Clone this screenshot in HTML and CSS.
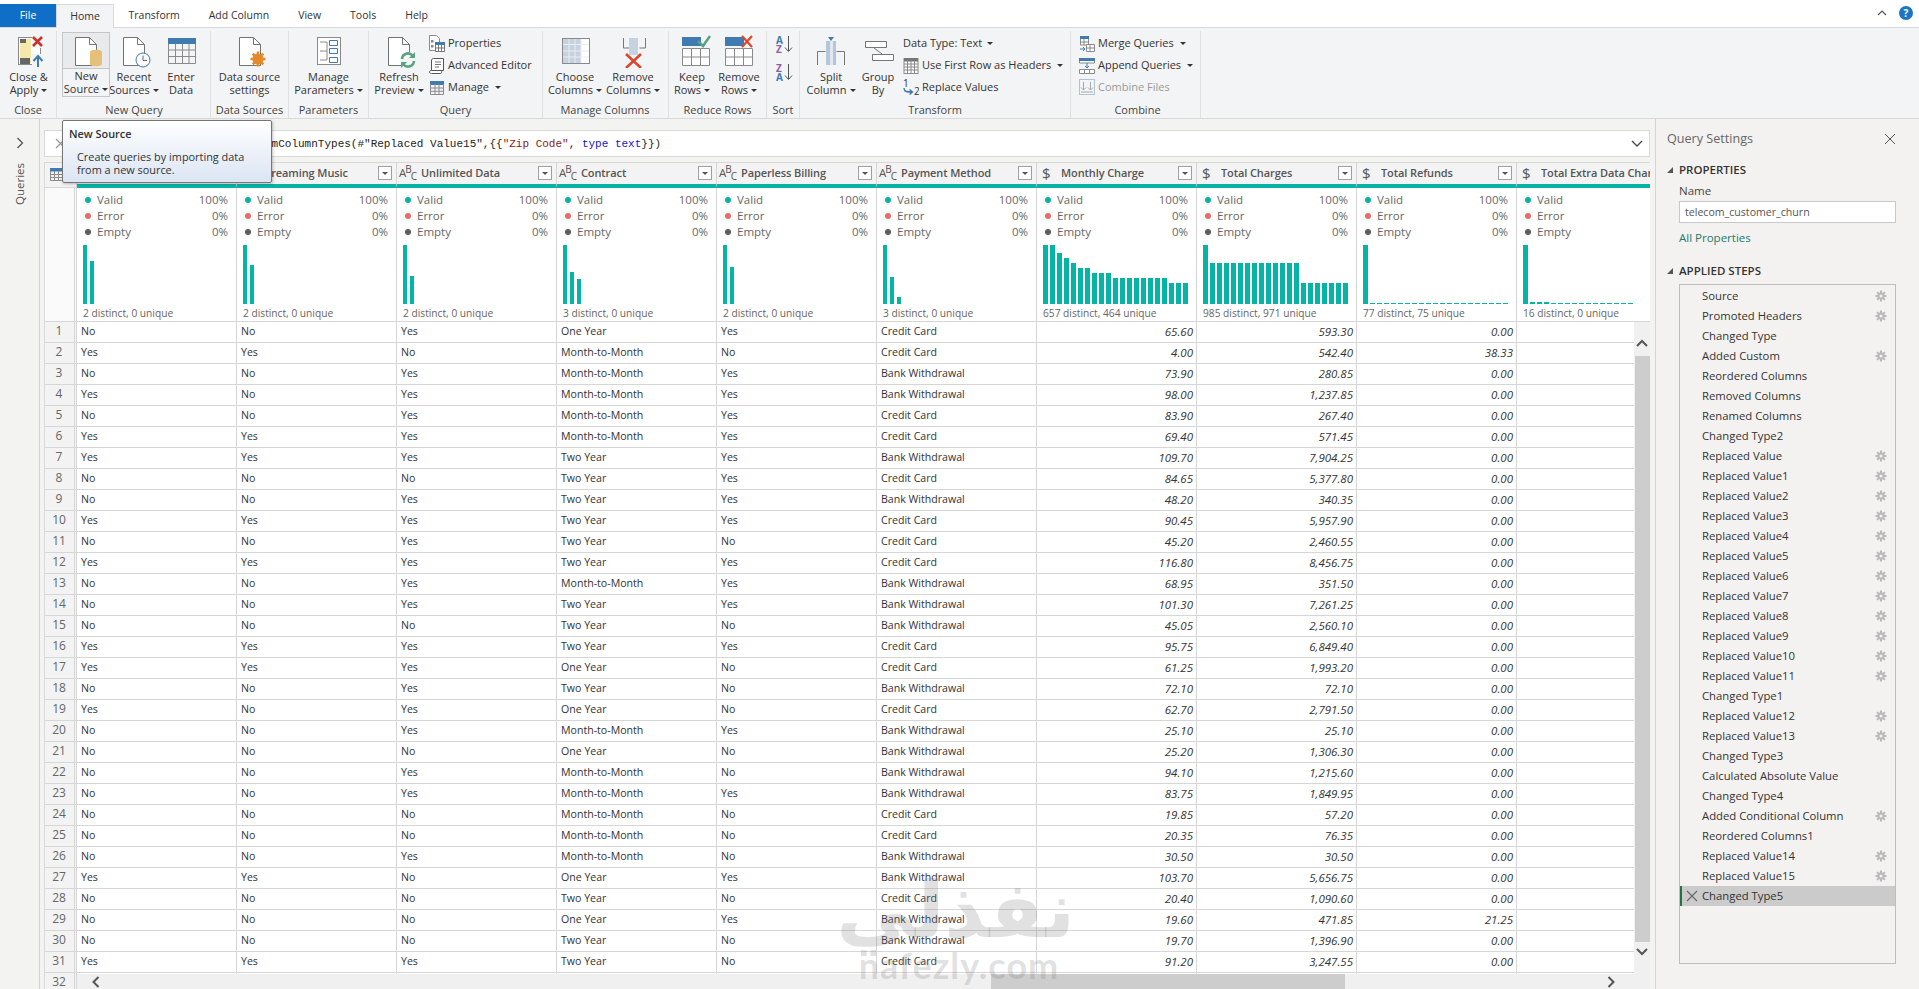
FILE: index.html
```html
<!DOCTYPE html>
<html lang="en">
<head>
<meta charset="utf-8">
<title>Power Query Editor</title>
<link rel="stylesheet" href="styles.css">
</head>
<body>
<svg class="defs" width="0" height="0" aria-hidden="true">
  <symbol id="gear" viewBox="0 0 12 12">
    <path d="M6 .5v11M.5 6h11M2.1 2.1l7.8 7.8M9.9 2.1l-7.8 7.8" stroke="#b9b9b9" stroke-width="2" fill="none"/>
    <circle cx="6" cy="6" r="3.6" fill="#b9b9b9"/>
    <circle cx="6" cy="6" r="1.5" fill="#f3f2f1"/>
  </symbol>
  <symbol id="page" viewBox="0 0 34 34">
    <path d="M6.5 3.5h14l7 7v21h-21z" fill="#fff" stroke="#737373"/>
    <path d="M20.5 3.5v7h7" fill="none" stroke="#737373"/>
  </symbol>
</svg>

<div class="tabs">
  <div class="tab file">File</div>
  <div class="tab home">Home</div>
  <div class="tab">Transform</div>
  <div class="tab">Add Column</div>
  <div class="tab">View</div>
  <div class="tab">Tools</div>
  <div class="tab">Help</div>
  <div class="tab-right">
    <svg width="10" height="6" viewBox="0 0 10 6"><path d="M1 5l4-4 4 4" fill="none" stroke="#555" stroke-width="1.2"/></svg>
    <span class="help">?</span>
  </div>
</div>

<div class="ribbon">
  <div class="group g1">
    <div class="gbody">
      <div class="btn w57">
        <div class="ico"><svg width="34" height="34" viewBox="0 0 34 34">
          <rect x="6.5" y="3.5" width="22" height="27" fill="#fff" stroke="#8a8a8a"/>
          <rect x="8" y="5" width="11" height="24" fill="#f6e8ad"/>
          <rect x="8" y="5" width="6" height="4" fill="#666"/>
          <rect x="8" y="24" width="10" height="6" fill="#666"/>
          <rect x="20" y="1" width="13" height="13" fill="#f3f4f5"/>
          <path d="M21 3l9 9M30 3l-9 9" stroke="#c8332b" stroke-width="2.6"/>
          <rect x="20" y="20" width="13" height="14" fill="#f3f4f5"/>
          <path d="M26 33V23M21.500 27l4.500-5 4.500 5" fill="none" stroke="#3f7ab0" stroke-width="2"/>
        </svg></div>
        <div class="lbl">Close &amp;<br>Apply<i class="caret"></i></div>
      </div>
    </div>
    <div class="gname">Close</div>
  </div>
  <div class="group g2">
    <div class="gbody">
      <div class="btn w48 hot">
        <div class="ico"><svg width="34" height="34" viewBox="0 0 34 34">
          <use href="#page" width="34" height="34"/>
          <path d="M21 18c0-3 12-3 12 0v12c0 3-12 3-12 0z" fill="#e5c078"/>
        </svg></div>
        <div class="lbl">New<br>Source<i class="caret"></i></div>
      </div>
      <div class="btn w48">
        <div class="ico"><svg width="34" height="34" viewBox="0 0 34 34">
          <use href="#page" width="34" height="34"/>
          <circle cx="26" cy="26" r="7" fill="#fff" stroke="#3f7ab0"/>
          <path d="M26 21.500v5h4" fill="none" stroke="#666"/>
        </svg></div>
        <div class="lbl">Recent<br>Sources<i class="caret"></i></div>
      </div>
      <div class="btn w46">
        <div class="ico"><svg width="34" height="34" viewBox="0 0 34 34">
          <rect x="4" y="4" width="28" height="6" fill="#3f7ab0"/>
          <path d="M4.500 10v19.500h27V10M4.500 16h27M4.500 22.500h27M11.500 10v19.500M18.500 10v19.500M25 10v19.500" fill="none" stroke="#8a8a8a"/>
        </svg></div>
        <div class="lbl">Enter<br>Data</div>
      </div>
    </div>
    <div class="gname">New Query</div>
  </div>
  <div class="group g3">
    <div class="gbody">
      <div class="btn wfull">
        <div class="ico"><svg width="34" height="34" viewBox="0 0 34 34">
          <use href="#page" width="34" height="34"/>
          <path d="M25 17.500v15M17.500 25h15M19.700 19.700l10.600 10.600M30.300 19.700l-10.600 10.600" stroke="#e38a2c" stroke-width="2.600"/>
          <circle cx="25" cy="25" r="4.300" fill="none" stroke="#e38a2c" stroke-width="2.500"/>
        </svg></div>
        <div class="lbl">Data source<br>settings</div>
      </div>
    </div>
    <div class="gname">Data Sources</div>
  </div>
  <div class="group g4">
    <div class="gbody">
      <div class="btn wfull">
        <div class="ico"><svg width="34" height="34" viewBox="0 0 34 34">
          <rect x="5.500" y="3.500" width="23" height="27" fill="#fff" stroke="#8a8a8a"/>
          <path d="M8 8h7M8 17h7M8 26h7M15 8v18" fill="none" stroke="#8a8a8a"/>
          <path d="M17.500 6.500h8v5h-8zM17.500 14.500h8v5h-8zM17.500 23.500h8v5h-8z" fill="#fff" stroke="#3f7ab0"/>
        </svg></div>
        <div class="lbl">Manage<br>Parameters<i class="caret"></i></div>
      </div>
    </div>
    <div class="gname">Parameters</div>
  </div>
  <div class="group g5">
    <div class="gbody">
      <div class="btn w60">
        <div class="ico"><svg width="34" height="34" viewBox="0 0 34 34">
          <use href="#page" width="34" height="34"/>
          <circle cx="26" cy="26" r="8" fill="#f3f4f5"/>
          <path d="M20 25a6 6 0 0 1 10.500-3.500M32 27a6 6 0 0 1-10.500 3.500" fill="none" stroke="#5aa382" stroke-width="2.600"/>
          <path d="M33 18v6h-6zM19 34v-6h6z" fill="#5aa382"/>
        </svg></div>
        <div class="lbl">Refresh<br>Preview<i class="caret"></i></div>
      </div>
      <div class="smalls">
        <div class="small"><svg width="16" height="17" viewBox="0 0 16 17">
          <path d="M.5.500h7l3 3v12h-10z" fill="#fff" stroke="#8a8a8a"/>
          <rect x="2" y="5" width="2.500" height="2.500" fill="#888"/><rect x="2" y="10" width="2.500" height="2.500" fill="#888"/>
          <rect x="6" y="7" width="10" height="3" fill="#3f7ab0"/>
          <path d="M6.500 10v6.500h9V10M6.500 13h9M9.500 10v6.500M12.500 10v6.500" fill="#fff" stroke="#777"/>
        </svg>Properties</div>
        <div class="small"><svg width="16" height="17" viewBox="0 0 16 17">
          <path d="M4.500 1.500h10v12h-12V4a2 2 0 0 1 2-2.500zM2.500 13.500c-1 0-2 .5-2 1.500s1 1.500 2 1.500h9c1 0 1.500-1.500 1-3" fill="#fff" stroke="#555"/>
          <path d="M6 5h6M6 7.500h6M6 10h4" stroke="#777"/>
        </svg>Advanced Editor</div>
        <div class="small"><svg width="16" height="17" viewBox="0 0 16 17">
          <rect x="1" y="2" width="14" height="4" fill="#3f7ab0"/>
          <path d="M1.500 5v10.500h13V5M1.500 9h13M1.500 12.300h13M6 5v10.500M10 5v10.500" fill="none" stroke="#8a8a8a"/>
        </svg>Manage<i class="caret gapped"></i></div>
      </div>
    </div>
    <div class="gname">Query</div>
  </div>
  <div class="group g6">
    <div class="gbody">
      <div class="btn w58">
        <div class="ico"><svg width="34" height="34" viewBox="0 0 34 34">
          <rect x="4.500" y="4.500" width="27" height="25" fill="#fff" stroke="#8a8a8a"/>
          <rect x="5" y="5" width="18" height="24" fill="#c6d2e0"/>
          <path d="M5 10.500h26M5 17h26M5 23h26M11 5v24M17 5v24M23 5v24" stroke="#e8edf2"/>
        </svg></div>
        <div class="lbl">Choose<br>Columns<i class="caret"></i></div>
      </div>
      <div class="btn w58">
        <div class="ico"><svg width="34" height="34" viewBox="0 0 34 34">
          <path d="M7.500 4v10h6M29.500 4v10h-6" fill="none" stroke="#777"/>
          <rect x="13" y="4" width="9" height="17" fill="#c6d2e0"/>
          <path d="M10 20l15 14M25 20L10 34" stroke="#d9482b" stroke-width="2.600"/>
        </svg></div>
        <div class="lbl">Remove<br>Columns<i class="caret"></i></div>
      </div>
    </div>
    <div class="gname">Manage Columns</div>
  </div>
  <div class="group g7">
    <div class="gbody">
      <div class="btn w46">
        <div class="ico"><svg class="over" width="34" height="34" viewBox="0 0 34 34">
          <rect x="7" y="3" width="19" height="9" fill="#3f7ab0"/>
          <path d="M23 7l5 5 7-10" fill="none" stroke="#5aa382" stroke-width="2.500"/>
          <path d="M7.500 14.500h27v17h-27zM7.500 23h27M16.500 14.500v17M25.500 14.500v17" fill="#fff" stroke="#8a8a8a"/>
        </svg></div>
        <div class="lbl">Keep<br>Rows<i class="caret"></i></div>
      </div>
      <div class="btn w48">
        <div class="ico"><svg class="over" width="34" height="34" viewBox="0 0 34 34">
          <rect x="3" y="3" width="19" height="9" fill="#3f7ab0"/>
          <path d="M20 2l10 11M30 2L20 13" stroke="#d9482b" stroke-width="2.300"/>
          <path d="M3.500 14.500h27v17h-27zM3.500 23h27M12.500 14.500v17M21.500 14.500v17" fill="#fff" stroke="#8a8a8a"/>
        </svg></div>
        <div class="lbl">Remove<br>Rows<i class="caret"></i></div>
      </div>
    </div>
    <div class="gname">Reduce Rows</div>
  </div>
  <div class="group g8">
    <div class="gbody sortbody">
      <svg width="18" height="20" viewBox="0 0 18 20">
        <text x="0" y="9" class="sa">A</text><text x="0" y="18" class="sz">Z</text>
        <path d="M12.500 1v15M9 12.500l3.500 4 3.500-4" fill="none" stroke="#555"/>
      </svg>
      <svg width="18" height="20" viewBox="0 0 18 20">
        <text x="0" y="9" class="sz">Z</text><text x="0" y="18" class="sa">A</text>
        <path d="M12.500 1v15M9 12.500l3.500 4 3.500-4" fill="none" stroke="#555"/>
      </svg>
    </div>
    <div class="gname">Sort</div>
  </div>
  <div class="group g9">
    <div class="gbody">
      <div class="btn w54">
        <div class="ico"><svg width="34" height="34" viewBox="0 0 34 34">
          <path d="M3.500 31V17.500h8M30.500 31V17.500h-8" fill="none" stroke="#777"/>
          <rect x="12" y="7" width="10" height="24" fill="#e3e8ee"/>
          <rect x="12" y="7" width="4" height="24" fill="#b6c6da"/>
          <rect x="19" y="7" width="3" height="24" fill="#b6c6da"/>
          <path d="M14 3h6l-3 4z" fill="#3f7ab0"/>
        </svg></div>
        <div class="lbl">Split<br>Column<i class="caret"></i></div>
      </div>
      <div class="btn w40">
        <div class="ico"><svg width="34" height="34" viewBox="0 0 34 34">
          <path d="M4.500 7.500h21v6h-21zM11.500 20.500h21v6h-21zM13 14l8 6" fill="#fff" stroke="#777"/>
        </svg></div>
        <div class="lbl">Group<br>By</div>
      </div>
      <div class="smalls tf">
        <div class="small">Data Type: Text<i class="caret"></i></div>
        <div class="small"><svg width="16" height="17" viewBox="0 0 16 17">
          <rect x="1" y="1.500" width="14" height="15" fill="#fff" stroke="#8a8a8a"/>
          <rect x="1" y="1" width="14" height="3.500" fill="#777"/>
          <path d="M1 7h14M1 10h14M1 13h14M4.500 4v12M8 4v12M11.500 4v12" stroke="#8a8a8a"/>
        </svg>Use First Row as Headers<i class="caret gapped"></i></div>
        <div class="small"><svg width="16" height="17" viewBox="0 0 16 17">
          <text x="0" y="8" class="nn">1</text><text x="11" y="16" class="nn">2</text>
          <path d="M1 9c0 4 3 4 8 4M6.500 10.500L9.500 13l-3 2.500" fill="none" stroke="#3f7ab0" stroke-width="1.400"/>
        </svg>Replace Values</div>
      </div>
    </div>
    <div class="gname">Transform</div>
  </div>
  <div class="group g10">
    <div class="gbody">
      <div class="smalls cb">
        <div class="small"><svg width="16" height="17" viewBox="0 0 16 17">
          <rect x="1" y="1" width="9" height="3" fill="#3f7ab0"/>
          <path d="M1.500 4v6h8V4M1.500 7h8M5 4v6" fill="#fff" stroke="#8a8a8a"/>
          <path d="M7.500 9.500h8v7h-8zM7.500 13h8M11 9.500v7" fill="#fff" stroke="#8a8a8a"/>
          <path d="M1 14h5M4 12l2 2-2 2" fill="none" stroke="#3f7ab0"/>
        </svg>Merge Queries<i class="caret gapped"></i></div>
        <div class="small"><svg width="16" height="17" viewBox="0 0 16 17">
          <rect x="0" y="1" width="16" height="3" fill="#3f7ab0"/>
          <path d="M.500 4v2h15V4M.500 12.500h15v4H.500zM5.500 12.500v4M10.500 12.500v4" fill="#fff" stroke="#8a8a8a"/>
          <path d="M8 6v5M6 9l2 2 2-2" fill="none" stroke="#3f7ab0"/>
        </svg>Append Queries<i class="caret gapped"></i></div>
        <div class="small off"><svg width="16" height="17" viewBox="0 0 16 17">
          <rect x=".5" y=".5" width="15" height="15" fill="none" stroke="#b3c2d0"/>
          <path d="M4.500 3v8M2 8.500l2.500 2.500L7 8.500M11.500 3v8M9 8.500l2.500 2.500L14 8.500M2 13h12" fill="none" stroke="#a8a8a8"/>
        </svg>Combine Files</div>
      </div>
    </div>
    <div class="gname">Combine</div>
  </div>
</div>

<div class="main">
  <div class="qpane">
    <svg width="8" height="12" viewBox="0 0 8 12"><path d="M1.500 1l5 5-5 5" fill="none" stroke="#555" stroke-width="1.300"/></svg>
    <div class="qlabel">Queries</div>
  </div>

  <div class="center">
    <div class="fbar">
      <div class="fbtns">
        <svg width="11" height="11" viewBox="0 0 11 11"><path d="M1 1l9 9M10 1l-9 9" stroke="#999" stroke-width="1.300"/></svg>
      </div>
      <code class="formula">= Table.TransformColumnTypes(#"Replaced Value15",{{<span class="str">"Zip Code"</span>, <span class="kw">type text</span>}})</code>
      <svg class="fchev" width="12" height="7" viewBox="0 0 12 7"><path d="M1 1l5 5 5-5" fill="none" stroke="#444" stroke-width="1.300"/></svg>
    </div>

    <div class="gridwrap">
      <table class="grid">
        <colgroup><col class="c0"><col class="cc" span="9"><col class="cl"></colgroup>
        <thead>
          <tr class="hdr">
            <th class="corner"><svg width="13" height="13" viewBox="0 0 13 13"><rect x="0" y="0" width="13" height="3.500" fill="#3f7ab0"/><path d="M.5 3v9.500h12V3M.5 6.500h12M.5 9.500h12M4.500 3v9.500M8.500 3v9.500" fill="none" stroke="#8a8a8a"/></svg></th>
            <th><div class="hc"><span class="abc">A<sup>B</sup><sub>C</sub></span><span class="hn">Streaming Video</span><i class="dd"></i></div></th>
            <th><div class="hc"><span class="abc">A<sup>B</sup><sub>C</sub></span><span class="hn">Streaming Music</span><i class="dd"></i></div></th>
            <th><div class="hc"><span class="abc">A<sup>B</sup><sub>C</sub></span><span class="hn">Unlimited Data</span><i class="dd"></i></div></th>
            <th><div class="hc"><span class="abc">A<sup>B</sup><sub>C</sub></span><span class="hn">Contract</span><i class="dd"></i></div></th>
            <th><div class="hc"><span class="abc">A<sup>B</sup><sub>C</sub></span><span class="hn">Paperless Billing</span><i class="dd"></i></div></th>
            <th><div class="hc"><span class="abc">A<sup>B</sup><sub>C</sub></span><span class="hn">Payment Method</span><i class="dd"></i></div></th>
            <th><div class="hc"><span class="abc usd">$</span><span class="hn">Monthly Charge</span><i class="dd"></i></div></th>
            <th><div class="hc"><span class="abc usd">$</span><span class="hn">Total Charges</span><i class="dd"></i></div></th>
            <th><div class="hc"><span class="abc usd">$</span><span class="hn">Total Refunds</span><i class="dd"></i></div></th>
            <th><div class="hc"><span class="abc usd">$</span><span class="hn">Total Extra Data Charges</span><i class="dd"></i></div></th>
          </tr>
          <tr class="prof">
            <th></th>
            <td><div class="q"><b class="v"></b>Valid<em>100%</em></div><div class="q"><b class="e"></b>Error<em>0%</em></div><div class="q"><b class="m"></b>Empty<em>0%</em></div>
              <div class="bars"><i style="height:59px"></i><i style="height:43px"></i></div><div class="dist">2 distinct, 0 unique</div></td>
            <td><div class="q"><b class="v"></b>Valid<em>100%</em></div><div class="q"><b class="e"></b>Error<em>0%</em></div><div class="q"><b class="m"></b>Empty<em>0%</em></div>
              <div class="bars"><i style="height:59px"></i><i style="height:39px"></i></div><div class="dist">2 distinct, 0 unique</div></td>
            <td><div class="q"><b class="v"></b>Valid<em>100%</em></div><div class="q"><b class="e"></b>Error<em>0%</em></div><div class="q"><b class="m"></b>Empty<em>0%</em></div>
              <div class="bars"><i style="height:59px"></i><i style="height:28px"></i></div><div class="dist">2 distinct, 0 unique</div></td>
            <td><div class="q"><b class="v"></b>Valid<em>100%</em></div><div class="q"><b class="e"></b>Error<em>0%</em></div><div class="q"><b class="m"></b>Empty<em>0%</em></div>
              <div class="bars"><i style="height:59px"></i><i style="height:32px"></i><i style="height:25px"></i></div><div class="dist">3 distinct, 0 unique</div></td>
            <td><div class="q"><b class="v"></b>Valid<em>100%</em></div><div class="q"><b class="e"></b>Error<em>0%</em></div><div class="q"><b class="m"></b>Empty<em>0%</em></div>
              <div class="bars"><i style="height:59px"></i><i style="height:37px"></i></div><div class="dist">2 distinct, 0 unique</div></td>
            <td><div class="q"><b class="v"></b>Valid<em>100%</em></div><div class="q"><b class="e"></b>Error<em>0%</em></div><div class="q"><b class="m"></b>Empty<em>0%</em></div>
              <div class="bars"><i style="height:59px"></i><i style="height:27px"></i><i style="height:7px"></i></div><div class="dist">3 distinct, 0 unique</div></td>
            <td><div class="q"><b class="v"></b>Valid<em>100%</em></div><div class="q"><b class="e"></b>Error<em>0%</em></div><div class="q"><b class="m"></b>Empty<em>0%</em></div>
              <div class="bars dense"><i style="height:59px"></i><i style="height:59px"></i><i style="height:51px"></i><i style="height:46px"></i><i style="height:41px"></i><i style="height:36px"></i><i style="height:36px"></i><i style="height:31px"></i><i style="height:31px"></i><i style="height:31px"></i><i style="height:26px"></i><i style="height:26px"></i><i style="height:26px"></i><i style="height:26px"></i><i style="height:26px"></i><i style="height:26px"></i><i style="height:26px"></i><i style="height:26px"></i><i style="height:21px"></i><i style="height:21px"></i><i style="height:21px"></i></div><div class="dist">657 distinct, 464 unique</div></td>
            <td><div class="q"><b class="v"></b>Valid<em>100%</em></div><div class="q"><b class="e"></b>Error<em>0%</em></div><div class="q"><b class="m"></b>Empty<em>0%</em></div>
              <div class="bars dense"><i style="height:59px"></i><i style="height:41px"></i><i style="height:41px"></i><i style="height:41px"></i><i style="height:41px"></i><i style="height:41px"></i><i style="height:41px"></i><i style="height:41px"></i><i style="height:41px"></i><i style="height:41px"></i><i style="height:41px"></i><i style="height:41px"></i><i style="height:41px"></i><i style="height:41px"></i><i style="height:21px"></i><i style="height:21px"></i><i style="height:21px"></i><i style="height:21px"></i><i style="height:21px"></i><i style="height:21px"></i><i style="height:21px"></i></div><div class="dist">985 distinct, 971 unique</div></td>
            <td><div class="q"><b class="v"></b>Valid<em>100%</em></div><div class="q"><b class="e"></b>Error<em>0%</em></div><div class="q"><b class="m"></b>Empty<em>0%</em></div>
              <div class="bars dense"><i style="height:59px"></i><i class="d"></i><i class="d"></i><i class="d"></i><i class="d"></i><i class="d"></i><i class="d"></i><i class="d"></i><i class="d"></i><i class="d"></i><i class="d"></i><i class="d"></i><i class="d"></i><i class="d"></i><i class="d"></i><i class="d"></i><i class="d"></i><i class="d"></i><i class="d"></i><i class="d"></i><i class="d"></i></div><div class="dist">77 distinct, 75 unique</div></td>
            <td><div class="q"><b class="v"></b>Valid<em>100%</em></div><div class="q"><b class="e"></b>Error<em>0%</em></div><div class="q"><b class="m"></b>Empty<em>0%</em></div>
              <div class="bars dense"><i style="height:59px"></i><i style="height:2px"></i><i style="height:2px"></i><i style="height:2px"></i><i class="d"></i><i class="d"></i><i class="d"></i><i class="d"></i><i class="d"></i><i class="d"></i><i class="d"></i><i class="d"></i><i class="d"></i><i class="d"></i><i class="d"></i><i class="d"></i></div><div class="dist">16 distinct, 0 unique</div></td>
          </tr>
        </thead>
        <tbody>
          <tr><th>1</th><td>No</td><td>No</td><td>Yes</td><td>One Year</td><td>Yes</td><td>Credit Card</td><td>65.60</td><td>593.30</td><td>0.00</td><td></td></tr>
          <tr><th>2</th><td>Yes</td><td>Yes</td><td>No</td><td>Month-to-Month</td><td>No</td><td>Credit Card</td><td>4.00</td><td>542.40</td><td>38.33</td><td></td></tr>
          <tr><th>3</th><td>No</td><td>No</td><td>Yes</td><td>Month-to-Month</td><td>Yes</td><td>Bank Withdrawal</td><td>73.90</td><td>280.85</td><td>0.00</td><td></td></tr>
          <tr><th>4</th><td>Yes</td><td>No</td><td>Yes</td><td>Month-to-Month</td><td>Yes</td><td>Bank Withdrawal</td><td>98.00</td><td>1,237.85</td><td>0.00</td><td></td></tr>
          <tr><th>5</th><td>No</td><td>No</td><td>Yes</td><td>Month-to-Month</td><td>Yes</td><td>Credit Card</td><td>83.90</td><td>267.40</td><td>0.00</td><td></td></tr>
          <tr><th>6</th><td>Yes</td><td>Yes</td><td>Yes</td><td>Month-to-Month</td><td>Yes</td><td>Credit Card</td><td>69.40</td><td>571.45</td><td>0.00</td><td></td></tr>
          <tr><th>7</th><td>Yes</td><td>Yes</td><td>Yes</td><td>Two Year</td><td>Yes</td><td>Bank Withdrawal</td><td>109.70</td><td>7,904.25</td><td>0.00</td><td></td></tr>
          <tr><th>8</th><td>No</td><td>No</td><td>No</td><td>Two Year</td><td>Yes</td><td>Credit Card</td><td>84.65</td><td>5,377.80</td><td>0.00</td><td></td></tr>
          <tr><th>9</th><td>No</td><td>No</td><td>Yes</td><td>Two Year</td><td>Yes</td><td>Bank Withdrawal</td><td>48.20</td><td>340.35</td><td>0.00</td><td></td></tr>
          <tr><th>10</th><td>Yes</td><td>Yes</td><td>Yes</td><td>Two Year</td><td>Yes</td><td>Credit Card</td><td>90.45</td><td>5,957.90</td><td>0.00</td><td></td></tr>
          <tr><th>11</th><td>No</td><td>No</td><td>Yes</td><td>Two Year</td><td>No</td><td>Credit Card</td><td>45.20</td><td>2,460.55</td><td>0.00</td><td></td></tr>
          <tr><th>12</th><td>Yes</td><td>Yes</td><td>Yes</td><td>Two Year</td><td>Yes</td><td>Credit Card</td><td>116.80</td><td>8,456.75</td><td>0.00</td><td></td></tr>
          <tr><th>13</th><td>No</td><td>No</td><td>Yes</td><td>Month-to-Month</td><td>Yes</td><td>Bank Withdrawal</td><td>68.95</td><td>351.50</td><td>0.00</td><td></td></tr>
          <tr><th>14</th><td>No</td><td>No</td><td>Yes</td><td>Two Year</td><td>Yes</td><td>Bank Withdrawal</td><td>101.30</td><td>7,261.25</td><td>0.00</td><td></td></tr>
          <tr><th>15</th><td>No</td><td>No</td><td>No</td><td>Two Year</td><td>No</td><td>Bank Withdrawal</td><td>45.05</td><td>2,560.10</td><td>0.00</td><td></td></tr>
          <tr><th>16</th><td>Yes</td><td>Yes</td><td>Yes</td><td>Two Year</td><td>Yes</td><td>Credit Card</td><td>95.75</td><td>6,849.40</td><td>0.00</td><td></td></tr>
          <tr><th>17</th><td>Yes</td><td>Yes</td><td>Yes</td><td>One Year</td><td>No</td><td>Credit Card</td><td>61.25</td><td>1,993.20</td><td>0.00</td><td></td></tr>
          <tr><th>18</th><td>No</td><td>No</td><td>Yes</td><td>Two Year</td><td>No</td><td>Bank Withdrawal</td><td>72.10</td><td>72.10</td><td>0.00</td><td></td></tr>
          <tr><th>19</th><td>Yes</td><td>No</td><td>Yes</td><td>One Year</td><td>No</td><td>Credit Card</td><td>62.70</td><td>2,791.50</td><td>0.00</td><td></td></tr>
          <tr><th>20</th><td>No</td><td>No</td><td>Yes</td><td>Month-to-Month</td><td>Yes</td><td>Bank Withdrawal</td><td>25.10</td><td>25.10</td><td>0.00</td><td></td></tr>
          <tr><th>21</th><td>No</td><td>No</td><td>No</td><td>One Year</td><td>No</td><td>Bank Withdrawal</td><td>25.20</td><td>1,306.30</td><td>0.00</td><td></td></tr>
          <tr><th>22</th><td>No</td><td>No</td><td>Yes</td><td>Month-to-Month</td><td>No</td><td>Bank Withdrawal</td><td>94.10</td><td>1,215.60</td><td>0.00</td><td></td></tr>
          <tr><th>23</th><td>No</td><td>No</td><td>Yes</td><td>Month-to-Month</td><td>Yes</td><td>Bank Withdrawal</td><td>83.75</td><td>1,849.95</td><td>0.00</td><td></td></tr>
          <tr><th>24</th><td>No</td><td>No</td><td>No</td><td>Month-to-Month</td><td>No</td><td>Credit Card</td><td>19.85</td><td>57.20</td><td>0.00</td><td></td></tr>
          <tr><th>25</th><td>No</td><td>No</td><td>No</td><td>Month-to-Month</td><td>No</td><td>Credit Card</td><td>20.35</td><td>76.35</td><td>0.00</td><td></td></tr>
          <tr><th>26</th><td>No</td><td>No</td><td>Yes</td><td>Month-to-Month</td><td>No</td><td>Bank Withdrawal</td><td>30.50</td><td>30.50</td><td>0.00</td><td></td></tr>
          <tr><th>27</th><td>Yes</td><td>Yes</td><td>No</td><td>One Year</td><td>Yes</td><td>Bank Withdrawal</td><td>103.70</td><td>5,656.75</td><td>0.00</td><td></td></tr>
          <tr><th>28</th><td>No</td><td>No</td><td>No</td><td>Two Year</td><td>No</td><td>Credit Card</td><td>20.40</td><td>1,090.60</td><td>0.00</td><td></td></tr>
          <tr><th>29</th><td>No</td><td>No</td><td>No</td><td>One Year</td><td>Yes</td><td>Bank Withdrawal</td><td>19.60</td><td>471.85</td><td>21.25</td><td></td></tr>
          <tr><th>30</th><td>No</td><td>No</td><td>No</td><td>Two Year</td><td>No</td><td>Bank Withdrawal</td><td>19.70</td><td>1,396.90</td><td>0.00</td><td></td></tr>
          <tr><th>31</th><td>Yes</td><td>Yes</td><td>Yes</td><td>Two Year</td><td>No</td><td>Credit Card</td><td>91.20</td><td>3,247.55</td><td>0.00</td><td></td></tr>
          <tr><th>32</th><td></td><td></td><td></td><td></td><td></td><td></td><td></td><td></td><td></td><td></td></tr>
        </tbody>
      </table>

      <div class="vscroll">
        <svg width="12" height="8" viewBox="0 0 12 8"><path d="M1 7l5-5 5 5" fill="none" stroke="#555" stroke-width="2"/></svg>
        <div class="vthumb"></div>
        <svg width="12" height="8" viewBox="0 0 12 8"><path d="M1 1l5 5 5-5" fill="none" stroke="#555" stroke-width="2"/></svg>
      </div>
      <div class="hscroll">
        <svg width="9" height="12" viewBox="0 0 9 12"><path d="M7.500 1l-5 5 5 5" fill="none" stroke="#555" stroke-width="2"/></svg>
        <div class="hthumb"></div>
        <svg width="9" height="12" viewBox="0 0 9 12"><path d="M1.500 1l5 5-5 5" fill="none" stroke="#555" stroke-width="2"/></svg>
      </div>
    </div>
  </div>

  <aside class="settings">
    <div class="s-head"><span>Query Settings</span>
      <svg width="12" height="12" viewBox="0 0 12 12"><path d="M1 1l10 10M11 1L1 11" stroke="#555" stroke-width="1"/></svg>
    </div>
    <div class="s-sec"><i class="tri"></i>PROPERTIES</div>
    <div class="s-name">Name</div>
    <div class="s-input">telecom_customer_churn</div>
    <div class="s-link">All Properties</div>
    <div class="s-sec s-sec2"><i class="tri"></i>APPLIED STEPS</div>
    <div class="steps">
      <div class="step">Source<svg><use href="#gear"/></svg></div>
      <div class="step">Promoted Headers<svg><use href="#gear"/></svg></div>
      <div class="step">Changed Type</div>
      <div class="step">Added Custom<svg><use href="#gear"/></svg></div>
      <div class="step">Reordered Columns</div>
      <div class="step">Removed Columns</div>
      <div class="step">Renamed Columns</div>
      <div class="step">Changed Type2</div>
      <div class="step">Replaced Value<svg><use href="#gear"/></svg></div>
      <div class="step">Replaced Value1<svg><use href="#gear"/></svg></div>
      <div class="step">Replaced Value2<svg><use href="#gear"/></svg></div>
      <div class="step">Replaced Value3<svg><use href="#gear"/></svg></div>
      <div class="step">Replaced Value4<svg><use href="#gear"/></svg></div>
      <div class="step">Replaced Value5<svg><use href="#gear"/></svg></div>
      <div class="step">Replaced Value6<svg><use href="#gear"/></svg></div>
      <div class="step">Replaced Value7<svg><use href="#gear"/></svg></div>
      <div class="step">Replaced Value8<svg><use href="#gear"/></svg></div>
      <div class="step">Replaced Value9<svg><use href="#gear"/></svg></div>
      <div class="step">Replaced Value10<svg><use href="#gear"/></svg></div>
      <div class="step">Replaced Value11<svg><use href="#gear"/></svg></div>
      <div class="step">Changed Type1</div>
      <div class="step">Replaced Value12<svg><use href="#gear"/></svg></div>
      <div class="step">Replaced Value13<svg><use href="#gear"/></svg></div>
      <div class="step">Changed Type3</div>
      <div class="step">Calculated Absolute Value</div>
      <div class="step">Changed Type4</div>
      <div class="step">Added Conditional Column<svg><use href="#gear"/></svg></div>
      <div class="step">Reordered Columns1</div>
      <div class="step">Replaced Value14<svg><use href="#gear"/></svg></div>
      <div class="step">Replaced Value15<svg><use href="#gear"/></svg></div>
      <div class="step active"><svg class="del" viewBox="0 0 12 12"><path d="M1 1l10 10M11 1L1 11" stroke="#666" stroke-width="1.100"/></svg>Changed Type5</div>
    </div>
  </aside>

  <div class="tooltip">
    <div class="tt-title">New Source</div>
    <div class="tt-body">Create queries by importing data<br>from a new source.</div>
  </div>
  <div class="watermark">
    <div class="wm-ar" lang="ar" dir="rtl">نفذلي</div>
    <div class="wm-en">nafezly.com</div>
  </div>
</div>
</body>
</html>
```
FILE: styles.css
```css
* { box-sizing: border-box; }
html, body { margin: 0; height: 100%; }
body {
  height: 989px;
  overflow: hidden;
  background: #fff;
  color: #333;
  font: 11.5px/1.2 "Open Sans", "Noto Sans", sans-serif;
  display: flex;
  flex-direction: column;
}
.defs { position: absolute; }

/* tabs */
.tabs {
  flex: none;
  height: 28px;
  padding-top: 4px;
  display: flex;
  border-bottom: 1px solid #d9d9d9;
  background: #fff;
  font-size: 10.5px;
}
.tab { padding: 0 14.5px; line-height: 23px; color: #333; }
.tab.file { width: 56px; padding: 0; text-align: center; background: #0f6fc6; color: #fff; }
.tab.home {
  width: 58px; padding: 0; text-align: center;
  height: 24px;
  background: #f3f4f5;
  border: 1px solid #d9d9d9;
  border-bottom: 0;
  line-height: 22px;
}
.tab-right { margin-left: auto; padding-right: 6px; display: flex; align-items: center; gap: 12px; height: 18px; }
.help {
  width: 14px; height: 14px; border-radius: 50%;
  background: #1b75c4; color: #fff;
  font-size: 10px; font-weight: 700; line-height: 14px; text-align: center;
}

/* ribbon */
.ribbon {
  flex: none;
  height: 91px;
  display: flex;
  background: #f3f4f5;
  border-bottom: 1px solid #d9d9d9;
  font-size: 11px;
}
.group {
  height: 87px;
  margin-top: 3px;
  display: flex;
  flex-direction: column;
  border-right: 1px solid #dfe0e1;
}
.gbody { height: 71px; padding-top: 1px; display: flex; }
.gname { height: 16px; line-height: 16px; text-align: center; color: #444; }
.g1 { width: 57px; }
.g2 { width: 154px; padding-left: 5px; }
.g3 { width: 78px; }
.g4 { width: 80px; }
.g5 { width: 174px; }
.g6 { width: 126px; padding-left: 3px; }
.g7 { width: 98px; }
.g8 { width: 33px; }
.g9 { width: 271px; padding-left: 4px; }
.g10 { width: 130px; padding-left: 8px; border-right: 1px solid #dfe0e1; }
.g2 .gname, .g6 .gname, .g9 .gname, .g10 .gname { margin-left: -4px; }

.btn { height: 65px; display: flex; flex-direction: column; align-items: center; flex: none; border: 1px solid transparent; }
.ico { height: 37px; padding-top: 1px; }
.ico svg { display: block; }
.ico svg.over { overflow: visible; }
.lbl { text-align: center; line-height: 13px; white-space: nowrap; color: #333; }
.w57 { width: 57px; } .w48 { width: 48px; } .w46 { width: 46px; }
.w60 { width: 60px; } .w58 { width: 58px; } .w54 { width: 54px; } .w40 { width: 40px; }
.wfull { width: 100%; }
.btn.hot { background: #e9eaeb; border-color: #c6c6c6; position: relative; }
.btn.hot .lbl { position: relative; background: #f3f4f5; width: 46px; border-top: 1px solid #c6c6c6; margin-top: -1px; padding-bottom: 1px; }
.caret {
  display: inline-block;
  width: 0; height: 0;
  margin-left: 3px;
  vertical-align: 2px;
  border: 3px solid transparent;
  border-top-color: #333;
  border-bottom: 0;
}
.caret.gapped { margin-left: 4px; }
.smalls { display: flex; flex-direction: column; }
.small { height: 22px; display: flex; align-items: center; gap: 2px; white-space: nowrap; color: #333; }
.small svg { flex: none; width: 17px; padding-right: 1px; }
.smalls.tf { margin-left: 5px; }
.small.off { color: #9a9a9a; }
.small .caret { vertical-align: middle; }
.sortbody { flex-direction: column; padding: 4px 0 0 9px; gap: 8px; }
.sa, .sz { font: 700 10px "Open Sans", sans-serif; }
.sa { fill: #3f7ab0; } .sz { fill: #8a5ea8; }
.nn { font: 10px "Open Sans", sans-serif; fill: #333; }

/* main */
.main { flex: 1; min-height: 0; display: flex; position: relative; background: #f3f3f2; }
.qpane {
  flex: none;
  width: 40px;
  border-right: 1px solid #d4d4d4;
  display: flex;
  flex-direction: column;
  align-items: center;
  padding-top: 18px;
  gap: 14px;
}
.qlabel { writing-mode: vertical-rl; transform: rotate(180deg); color: #555; font-size: 11.5px; }

.center { flex: 1; min-width: 0; display: flex; flex-direction: column; padding: 11px 5px 0 4px; gap: 5px; }
.fbar {
  flex: none;
  height: 27px;
  display: flex;
  align-items: center;
  background: #fff;
  border: 1px solid #d9d9d9;
}
.fbtns { width: 121px; flex: none; padding-left: 10px; }
.fbtns svg { display: block; }
.formula { font: 11px/1 "Liberation Mono", monospace; color: #222; white-space: pre; padding-top: 2px; }
.str { color: #8b1a1a; }
.kw { color: #1414c8; }
.fchev { margin-left: auto; margin-right: 6px; }

/* grid */
.gridwrap { flex: 1; min-height: 0; position: relative; overflow: hidden; background: #fff; border: 1px solid #d9d9d9; border-width: 1px 0 0 1px; }
.grid { border-collapse: separate; border-spacing: 0; table-layout: fixed; width: 1662px; }
.c0 { width: 32px; }
.cc { width: 160px; }
.cl { width: 190px; }
.grid th, .grid td { padding: 0; border-bottom: 1px solid #d6d6d6; border-right: 1px solid #d6d6d6; font-weight: 400; }
.grid tbody th, .prof th, .corner { border-right: 3px double #d6d6d6; }
.grid tbody tr { height: 21px; }
.grid tbody th { background: #f3f3f3; color: #666; text-align: center; font-size: 12px; padding: 0 1px 1px 0; }
.grid tbody td { padding: 0 3px 1px 4px; color: #333; white-space: nowrap; overflow: hidden; font-size: 10.6px; }
.grid tbody td:nth-child(n+8):nth-child(-n+10) { text-align: right; font-style: italic; font-size: 11.5px; }
.hdr { height: 25px; }
.hdr th { background: #f3f3f3; border-bottom: 4px solid #06b4a6; border-right-color: #d6d6d6; vertical-align: top; }
.hdr .corner { border-bottom: 1px solid #d6d6d6; padding: 5px 0 3px 5px; text-align: left; }
.corner svg { display: block; }
.hc { display: flex; align-items: center; height: 20px; padding: 0 4px 0 2px; text-align: left; }
.abc { flex: none; width: 22px; font-size: 11.5px; color: #555; line-height: 1; white-space: nowrap; font-weight: 400; }
.abc sup, .abc sub { font-size: 10px; line-height: 0; position: relative; vertical-align: baseline; margin-left: -1px; }
.abc sup { top: -4px; }
.abc sub { top: 3px; }
.abc.usd { font-size: 15px; padding-left: 3px; }
.hn { flex: 1; min-width: 0; overflow: hidden; white-space: nowrap; font-weight: 600; color: #555; font-size: 11px; letter-spacing: -.1px; }
.dd { flex: none; width: 14px; height: 14px; border: 1px solid #a0a0a0; background: #fff; position: relative; margin-left: 4px; }
.dd::after { content: ""; position: absolute; left: 3px; top: 5px; border: 3px solid transparent; border-top: 3px solid #555; border-bottom: 0; }

.prof { height: 134px; }
.prof th { background: #fafafa; }
.prof td { vertical-align: top; padding: 4px 8px 0 6px; background: #fff; }
.q { height: 16px; display: flex; align-items: center; color: #666; line-height: 16px; }
.q b { width: 6px; height: 6px; border-radius: 50%; margin: 0 6px 0 2px; flex: none; }
.q em { margin-left: auto; font-style: normal; }
.v { background: #06b4a6; }
.e { background: #e66c6c; }
.m { background: #5f5f5f; }
.bars { height: 59px; margin-top: 5px; display: flex; align-items: flex-end; gap: 3px; }
.bars i { width: 4px; flex: none; background: #06b4a6; }
.bars.dense { gap: 2px; }
.bars.dense i { width: 5px; }
.bars .d { height: 1px; }
.dist { margin-top: 1px; height: 16px; line-height: 16px; color: #666; font-size: 10.2px; white-space: nowrap; }

.vscroll {
  position: absolute; top: 159px; right: 0; width: 16px; height: 652px;
  background: #f0f0f0;
  display: flex; flex-direction: column; align-items: center;
  padding: 17px 0 18px;
}
.vscroll svg, .hscroll svg { flex: none; display: block; }
.vthumb { flex: 1; width: 15px; margin: 9px 0 6px; background: #cdcdcd; }
.hscroll {
  position: absolute; left: 32px; right: 0; bottom: 0; height: 15px;
  background: #f0f0f0;
  display: flex; align-items: center;
  padding-left: 14px;
}
.hthumb { width: 354px; height: 15px; margin: 0 262px 0 891px; background: #cdcdcd; }

/* settings */
.settings { flex: none; width: 264px; background: #f3f2f1; border-left: 1px solid #d4d4d4; padding: 0 23px 0 23px; position: relative; }
.s-head {
  height: 38px;
  margin: 0 0 0 -12px;
  padding-top: 2px;
  display: flex; justify-content: space-between; align-items: center;
  font-size: 12.6px; color: #666;
}
.s-sec { height: 14px; margin-top: 6px; line-height: 14px; font-weight: 600; color: #333; font-size: 11.5px; position: relative; }
.s-sec2 { margin-top: 18px; }
.tri { position: absolute; left: -12px; top: 4px; border: 3.5px solid transparent; border-right-color: #555; border-bottom-color: #555; }
.s-name { margin-top: 6px; height: 16px; line-height: 16px; color: #444; }
.s-input { margin-top: 2px; height: 22px; background: #fff; border: 1px solid #c8c8c8; padding-left: 5px; line-height: 20px; color: #555; font-size: 10.6px; }
.s-link { margin-top: 7px; height: 16px; line-height: 16px; color: #217a6e; }
.steps { margin-top: 6px; height: 680px; border: 1px solid #bdbdbd; padding-top: 1px; }
.step { height: 20px; line-height: 20px; padding-left: 22px; color: #333; position: relative; white-space: nowrap; font-size: 11.3px; }
.step > svg { position: absolute; right: 8px; top: 4px; width: 12px; height: 12px; }
.step.active { background: #cbcbcb; border-left: 2px solid #217346; padding-left: 20px; }
.step > svg.del { left: 4px; right: auto; top: 4px; width: 12px; height: 12px; }

/* overlays */
.tooltip {
  position: absolute; left: 62px; top: 1px; width: 210px; height: 63px;
  background: linear-gradient(#fff, #dbe5f3);
  border: 1px solid #767676;
  border-radius: 2px;
  box-shadow: 1px 1px 3px rgba(0,0,0,.25);
  padding: 5px 6px 0;
  color: #333;
  font-size: 10.9px;
  z-index: 5;
}
.tt-title { font-weight: 600; height: 16px; line-height: 16px; }
.tt-body { margin: 8px 0 0 8px; line-height: 13px; }
.watermark {
  position: absolute; left: 843px; top: 752px; width: 232px;
  pointer-events: none; z-index: 4;
  text-align: center;
  color: rgba(120,120,120,.22);
}
.wm-ar { font: 700 78px/78px "DejaVu Sans", sans-serif; }
.wm-en { font: 700 36px/32px Lato, sans-serif; letter-spacing: 1px; }
```
